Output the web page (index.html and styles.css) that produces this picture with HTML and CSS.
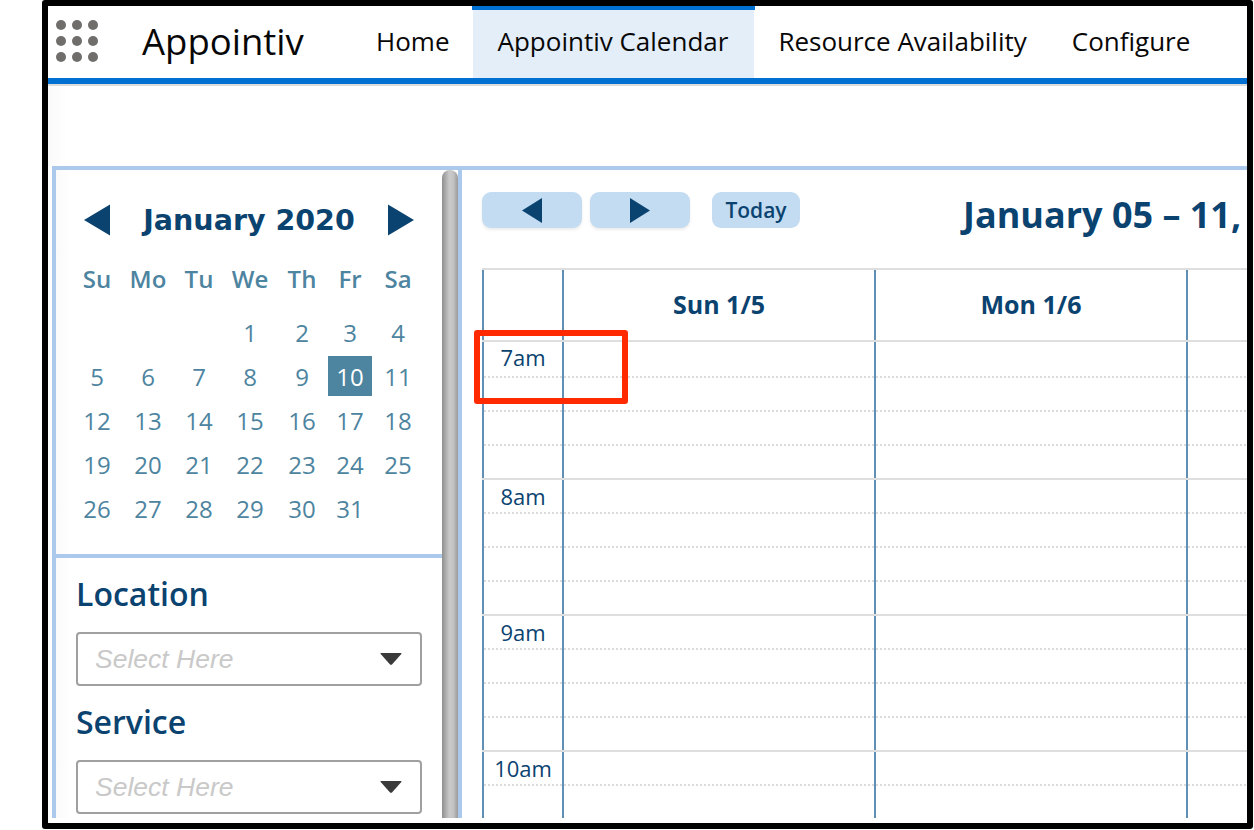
FILE: index.html
```html
<!DOCTYPE html>
<html lang="en">
<head>
<meta charset="utf-8">
<title>Appointiv Calendar</title>
<link rel="stylesheet" href="styles.css">
</head>
<body>
<div class="frame">
  <header class="app-header">
    <div class="launcher"><i></i><i></i><i></i><i></i><i></i><i></i><i></i><i></i><i></i></div>
    <div class="app-name">Appointiv</div>
    <nav class="tabs">
      <a class="tab">Home</a>
      <a class="tab active">Appointiv Calendar</a>
      <a class="tab tight">Resource Availability</a>
      <a class="tab">Configure</a>
    </nav>
  </header>
  <div class="spacer"></div>
  <main class="panel">
    <aside class="sidebar">
      <div class="sidebar-body">
        <section class="mini-cal">
          <div class="mini-head">
            <svg class="arrow" viewBox="0 0 27 32"><path d="M0 16 27 0V32Z"/></svg>
            <div class="mini-title">January 2020</div>
            <svg class="arrow" viewBox="0 0 27 32"><path d="M27 16 0 0V32Z"/></svg>
          </div>
          <div class="mini-grid dow">
            <span>Su</span><span>Mo</span><span>Tu</span><span>We</span><span>Th</span><span>Fr</span><span>Sa</span>
          </div>
          <div class="mini-grid days">
            <span></span><span></span><span></span><span>1</span><span>2</span><span>3</span><span>4</span>
            <span>5</span><span>6</span><span>7</span><span>8</span><span>9</span><span class="today">10</span><span>11</span>
            <span>12</span><span>13</span><span>14</span><span>15</span><span>16</span><span>17</span><span>18</span>
            <span>19</span><span>20</span><span>21</span><span>22</span><span>23</span><span>24</span><span>25</span>
            <span>26</span><span>27</span><span>28</span><span>29</span><span>30</span><span>31</span><span></span>
          </div>
        </section>
        <section class="filters">
          <h3 class="filter-label">Location</h3>
          <div class="select"><span>Select Here</span><svg class="caret" viewBox="0 0 22 12"><path d="M1 0H21Q22 0 21.300 1L12 11.500Q11 12 10 11.500L.7 1Q0 0 1 0Z"/></svg></div>
          <h3 class="filter-label second">Service</h3>
          <div class="select"><span>Select Here</span><svg class="caret" viewBox="0 0 22 12"><path d="M1 0H21Q22 0 21.300 1L12 11.500Q11 12 10 11.500L.7 1Q0 0 1 0Z"/></svg></div>
        </section>
      </div>
      <div class="scrollbar"><div class="thumb"></div></div>
    </aside>
    <section class="content">
      <div class="toolbar">
        <button class="btn nav-btn"><svg class="btn-arrow" viewBox="0 0 20 25"><path d="M0 12.500 20 0V25Z"/></svg></button>
        <button class="btn nav-btn"><svg class="btn-arrow" viewBox="0 0 20 25"><path d="M20 12.500 0 0V25Z"/></svg></button>
        <button class="btn today-btn">Today</button>
        <h2 class="range">January 05 – 11,</h2>
      </div>
      <div class="week">
        <div class="row head"><div class="cell"></div><div class="cell">Sun 1/5</div><div class="cell">Mon 1/6</div><div class="cell"></div></div>

        <div class="row hour first"><div class="cell time">7am</div><div class="cell"></div><div class="cell"></div><div class="cell"></div></div>
        <div class="row"><div class="cell"></div><div class="cell"></div><div class="cell"></div><div class="cell"></div></div>
        <div class="row"><div class="cell"></div><div class="cell"></div><div class="cell"></div><div class="cell"></div></div>
        <div class="row last"><div class="cell"></div><div class="cell"></div><div class="cell"></div><div class="cell"></div></div>

        <div class="row hour"><div class="cell time">8am</div><div class="cell"></div><div class="cell"></div><div class="cell"></div></div>
        <div class="row"><div class="cell"></div><div class="cell"></div><div class="cell"></div><div class="cell"></div></div>
        <div class="row"><div class="cell"></div><div class="cell"></div><div class="cell"></div><div class="cell"></div></div>
        <div class="row last"><div class="cell"></div><div class="cell"></div><div class="cell"></div><div class="cell"></div></div>

        <div class="row hour"><div class="cell time">9am</div><div class="cell"></div><div class="cell"></div><div class="cell"></div></div>
        <div class="row"><div class="cell"></div><div class="cell"></div><div class="cell"></div><div class="cell"></div></div>
        <div class="row"><div class="cell"></div><div class="cell"></div><div class="cell"></div><div class="cell"></div></div>
        <div class="row last"><div class="cell"></div><div class="cell"></div><div class="cell"></div><div class="cell"></div></div>

        <div class="row hour"><div class="cell time">10am</div><div class="cell"></div><div class="cell"></div><div class="cell"></div></div>
        <div class="row last"><div class="cell"></div><div class="cell"></div><div class="cell"></div><div class="cell"></div></div>
      </div>
    </section>
  </main>
  <div class="callout"></div>
</div>
</body>
</html>
```

FILE: styles.css
```css
* { box-sizing: border-box; }
html, body { margin: 0; padding: 0; background: #fff; overflow: hidden; }
body { font-family: "Open Sans", "Noto Sans", sans-serif; color: #0b4370; }

.frame {
  position: relative;
  width: 1211px;
  height: 829px;
  margin-left: 42px;
  border: 6px solid #000;
  border-radius: 3px;
  background: #fff;
  overflow: hidden;
  display: flex;
  flex-direction: column;
}

/* Header */
.app-header {
  height: 78px;
  flex: none;
  display: flex;
  align-items: stretch;
  border-bottom: 6px solid #0070d2;
  box-shadow: 0 2px 0 #dcdcdc;
  padding-left: 8px;
  position: relative;
  z-index: 1;
}
.launcher {
  width: 42px;
  height: 42px;
  margin-top: 14px;
  display: grid;
  grid-template-columns: repeat(3, 10px);
  grid-auto-rows: 10px;
  gap: 6px;
}
.launcher i { background: #706e6b; border-radius: 50%; }
.app-name {
  width: 210px;
  margin-left: 44px;
  color: #080707;
  font-size: 36.500px;
  line-height: 70px;
  height: 72px;
}
.tabs { display: flex; }
.tab {
  padding: 0 24px;
  color: #080707;
  font-size: 26px;
  line-height: 62px;
  border-top: 4px solid transparent;
  white-space: nowrap;
}
.tab.active { position: relative; background: #e3eef9; padding-right: 26px; }
.tab.active::before {
  content: "";
  position: absolute;
  left: -1px;
  right: -1px;
  top: -4px;
  height: 4px;
  background: #0070d2;
}
.tab.tight { padding-right: 21px; }

.spacer { height: 82px; flex: none; background: linear-gradient(90deg, #fafafa, #fff 20px); }

/* Panel */
.panel {
  flex: 1;
  margin: 0 0 5px 4px;
  min-height: 0;
  display: flex;
  border-top: 4px solid #abc9ea;
  border-left: 4px solid #abc9ea;
  overflow: hidden;
}
.sidebar {
  width: 406px;
  flex: none;
  display: flex;
  border-right: 4px solid #abc9ea;
}
.sidebar-body { width: 386px; flex: none; background: linear-gradient(90deg, #fafafa, #fff 16px); }
.scrollbar { width: 16px; flex: none; }
.thumb {
  height: 100%;
  border-radius: 8px 8px 0 0;
  background: linear-gradient(90deg, #8f8f8f, #c9c9c9 45%, #c4c4c4 70%, #9a9a9a);
}

/* Mini calendar */
.mini-cal { height: 388px; border-bottom: 4px solid #abc9ea; padding: 32px 0 0 16px; }
.mini-head {
  display: flex;
  align-items: center;
  height: 36px;
  margin-left: 12px;
  width: 330px;
  justify-content: space-between;
}
.arrow { width: 26px; height: 32px; fill: #0b4370; }
.mini-title {
  font-family: "DejaVu Sans", sans-serif;
  font-weight: 700;
  font-size: 28.500px;
  color: #0b4370;
}
.mini-grid {
  display: grid;
  grid-template-columns: 50px 52px 50px 52px 52px 44px 52px;
  text-align: center;
}
.dow { margin-top: 25px; height: 32px; font-weight: 600; font-size: 24px; line-height: 32px; color: #4d84a0; }
.days { margin-top: 17px; grid-auto-rows: 44px; font-size: 24px; line-height: 42px; color: #4d84a0; }
.days .today { background: #4d84a0; color: #fff; height: 40px; }

/* Filters */
.filters { padding: 15px 20px 0; }
.filter-label { margin: 0; font-size: 32px; line-height: 42px; font-weight: 600; color: #0b4370; }
.filter-label.second { margin-top: 15px; }
.select {
  height: 54px;
  margin-top: 17px;
  border: 2px solid #a0a0a0;
  border-radius: 4px;
  display: flex;
  align-items: center;
  justify-content: space-between;
  padding: 0 18px 0 17px;
  font-family: "Liberation Sans", Arial, sans-serif;
  font-style: italic;
  font-size: 26.500px;
  color: #c9c9c9;
}
.caret { width: 22px; height: 12px; fill: #3a3a3a; }

/* Week view */
.content { flex: 1; min-width: 0; padding: 22px 0 0 20px; overflow: hidden; }
.toolbar { display: flex; height: 76px; align-items: flex-start; white-space: nowrap; }
.btn {
  flex: none;
  height: 36px;
  border: 0;
  border-radius: 9px;
  background: #c3dcf2;
  padding: 0;
  display: flex;
  align-items: center;
  justify-content: center;
  font-family: inherit;
  color: #0b4370;
}
.nav-btn { width: 100px; margin-right: 8px; box-shadow: 0 2px 3px rgba(0,0,0,.08); }
.btn-arrow { width: 20px; height: 25px; fill: #0b4370; }
.today-btn { width: 88px; margin-left: 14px; font-size: 21px; font-weight: 600; }
.range { flex: none; margin: 2px 0 0 163px; font-size: 36px; line-height: 42px; font-weight: 700; color: #0b4370; }

.week { width: 860px; border-top: 2px solid #dedede; }
.row {
  display: grid;
  grid-template-columns: 80px 312px 312px 156px;
  height: 34px;
}
.row.hour { border-top: 2px solid #dedede; height: 36px; }
.row.hour.first { height: 38px; }
.row.head { height: 70px; }
.row.last { height: 32px; }
.cell {
  border-left: 2px solid #6090b6;
  background: repeating-linear-gradient(90deg, #dcdcdc 0 2px, transparent 2px 4px) left bottom / 100% 2px no-repeat;
}
.row.last .cell { background: none; }
.head .cell {
  background: none;
  text-align: center;
  font-weight: 700;
  font-size: 25px;
  line-height: 68px;
  color: #0b4370;
}
.time { text-align: center; font-size: 22px; line-height: 32px; color: #0b4370; }
.first .time { line-height: 30px; }

/* Annotation */
.callout {
  position: absolute;
  left: 426px;
  top: 324px;
  width: 154px;
  height: 74px;
  border: 6px solid #ff2a00;
  border-radius: 3px;
  z-index: 2;
}
```
